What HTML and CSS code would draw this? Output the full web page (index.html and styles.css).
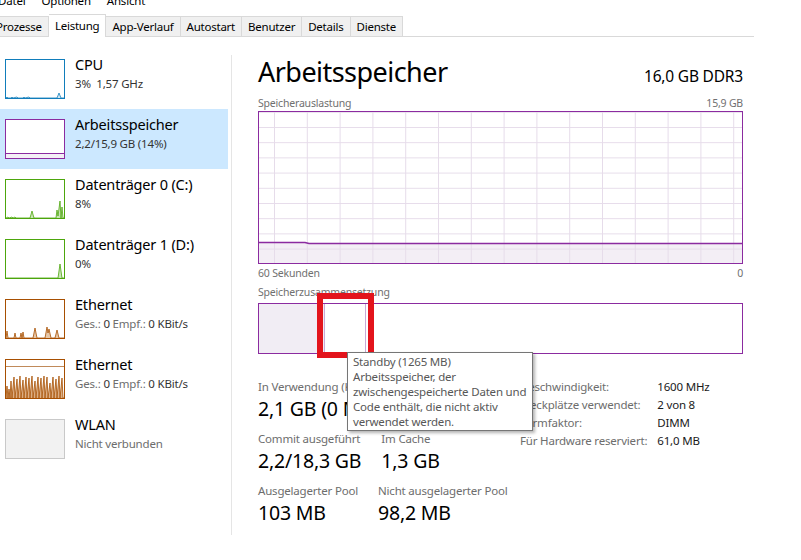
FILE: index.html
```html
<!DOCTYPE html>
<html lang="de">
<head>
    <meta charset="UTF-8">
    <title>Task-Manager</title>
    <link rel="stylesheet" href="styles.css">
</head>
<body>
    <div class="menu"><span>Datei</span><span>Optionen</span><span>Ansicht</span></div>
    <div class="tabs">
        <div class="tab">Prozesse</div>
        <div class="tab on">Leistung</div>
        <div class="tab">App-Verlauf</div>
        <div class="tab">Autostart</div>
        <div class="tab">Benutzer</div>
        <div class="tab">Details</div>
        <div class="tab">Dienste</div>
    </div>
    <div class="main">
        <div class="side">
            <div class="item">
                <svg class="thumb" viewBox="0 0 60 40">
                    <rect x="0.5" y="0.5" width="59" height="39" fill="#fff" stroke="#117dbb"/>
                    <polyline points="1,39 2,38 3,39 6,39 7,38 8,39 12,38 13,39 18,39 19,38 20,39 24,38 25,39 52,39 54,34 56,39 59,39" fill="#d5e9f5" stroke="#117dbb" stroke-width="0.8"/>
                </svg>
                <div class="txt">
                    <div class="name">CPU</div>
                    <div class="sub">3%&nbsp; 1,57 GHz</div>
                </div>
            </div>
            <div class="item on">
                <svg class="thumb" viewBox="0 0 60 40">
                    <rect x="0.5" y="0.5" width="59" height="39" fill="#fff" stroke="#8b2ba0"/>
                    <rect x="1" y="34" width="58" height="5" fill="#f4eff6"/>
                    <line x1="1" y1="34.5" x2="59" y2="34.5" stroke="#8b2ba0"/>
                </svg>
                <div class="txt">
                    <div class="name">Arbeitsspeicher</div>
                    <div class="sub">2,2/15,9 GB (14%)</div>
                </div>
            </div>
            <div class="item">
                <svg class="thumb" viewBox="0 0 60 40">
                    <rect x="0.5" y="0.5" width="59" height="39" fill="#fff" stroke="#4da60c"/>
                    <polyline points="1,39 3,38 4,39 7,38 8,39 10,38 11,39 25,39 27,32 29,39 51,39 52,31 53,37 55,22 56,39 57,28 58,39 59,39" fill="#c9e5b5" stroke="#4da60c" stroke-width="0.8"/>
                </svg>
                <div class="txt">
                    <div class="name">Datenträger 0 (C:)</div>
                    <div class="sub">8%</div>
                </div>
            </div>
            <div class="item">
                <svg class="thumb" viewBox="0 0 60 40">
                    <rect x="0.5" y="0.5" width="59" height="39" fill="#fff" stroke="#4da60c"/>
                    <polyline points="1,39 53,39 55,25 57,39 59,39" fill="#c9e5b5" stroke="#4da60c" stroke-width="0.8"/>
                </svg>
                <div class="txt">
                    <div class="name">Datenträger 1 (D:)</div>
                    <div class="sub">0%</div>
                </div>
            </div>
            <div class="item">
                <svg class="thumb" viewBox="0 0 60 40">
                    <rect x="0.5" y="0.5" width="59" height="39" fill="#fff" stroke="#a74f01"/>
                    <polyline points="1,39 2,32 3,39 9,39 10,34 11,39 15,39 16,34 17,39 18,33 19,39 28,39 30,29 32,39 40,39 42,28 43,34 44,30 46,39 50,39 52,31 54,39 59,39" fill="#e6c7a8" stroke="#a74f01" stroke-width="0.8"/>
                </svg>
                <div class="txt">
                    <div class="name">Ethernet</div>
                    <div class="sub"><span class="dim">Ges.:</span> 0 <span class="dim">Empf.:</span> 0 KBit/s</div>
                </div>
            </div>
            <div class="item">
                <svg class="thumb" viewBox="0 0 60 40">
                    <rect x="0.5" y="0.5" width="59" height="39" fill="#fff" stroke="#a74f01"/>
                    <line x1="1" y1="7.5" x2="59" y2="7.5" stroke="#c08a5a"/>
                    <polyline points="1,39 2,27 3,39 4,30 5,39 6,22 7,39 9,18 10,39 12,20 13,39 15,17 16,39 18,21 19,39 21,18 22,39 24,19 25,39 27,17 28,39 30,22 31,39 33,18 34,39 36,19 37,39 39,17 40,39 42,18 43,39 45,24 46,39 48,18 49,39 51,20 52,39 54,17 55,39 57,19 58,39 59,39" fill="#dcae84" stroke="#a74f01" stroke-width="0.8"/>
                </svg>
                <div class="txt">
                    <div class="name">Ethernet</div>
                    <div class="sub"><span class="dim">Ges.:</span> 0 <span class="dim">Empf.:</span> 0 KBit/s</div>
                </div>
            </div>
            <div class="item">
                <svg class="thumb" viewBox="0 0 60 40">
                    <rect x="0.5" y="0.5" width="59" height="39" fill="#f2f2f2" stroke="#c9c9c9"/>
                </svg>
                <div class="txt">
                    <div class="name">WLAN</div>
                    <div class="sub dim">Nicht verbunden</div>
                </div>
            </div>
        </div>

        <div class="panel">
            <div class="head">
                <h1>Arbeitsspeicher</h1>
                <span class="total">16,0 GB DDR3</span>
            </div>
            <div class="cap"><span>Speicherauslastung</span><span>15,9 GB</span></div>
            <div class="chart">
                <svg width="483" height="151" viewBox="0 0 483 151">
                    <defs>
                        <pattern id="grid" x="15" y="15" width="32.8" height="15.2" patternUnits="userSpaceOnUse">
                            <path d="M0.5 0V15.2M0 0.5H32.8" stroke="#e6dcea" fill="none"/>
                        </pattern>
                    </defs>
                    <polygon points="0,130 46,130 50,131 483,131 483,151 0,151" fill="#f3eef5"/>
                    <rect width="483" height="151" fill="url(#grid)"/>
                    <polyline points="0,130.5 46,130.5 50,131.5 483,131.5" fill="none" stroke="#8b2ba0" stroke-width="1.4"/>
                </svg>
            </div>
            <div class="cap sec"><span>60 Sekunden</span><span>0</span></div>
            <div class="cap label">Speicherzusammensetzung</div>
            <div class="comp">
                <div class="used"></div>
                <div class="standby"></div>
                <div class="mark"></div>
                <div class="tip">
                    Standby (1265 MB)<br>
                    Arbeitsspeicher, der<br>
                    zwischengespeicherte Daten und<br>
                    Code enthält, die nicht aktiv<br>
                    verwendet werden.
                </div>
            </div>
            <div class="stats">
                <div class="left">
                    <div class="row">
                        <div><div class="lb">In Verwendung (Komprimiert)</div><div class="val">2,1 GB (0 MB)</div></div>
                        <div><div class="lb">Verfügbar</div><div class="val">13,7 GB</div></div>
                    </div>
                    <div class="row">
                        <div><div class="lb">Commit ausgeführt</div><div class="val">2,2/18,3 GB</div></div>
                        <div><div class="lb">Im Cache</div><div class="val">1,3 GB</div></div>
                    </div>
                    <div class="row">
                        <div><div class="lb">Ausgelagerter Pool</div><div class="val">103 MB</div></div>
                        <div><div class="lb">Nicht ausgelagerter Pool</div><div class="val">98,2 MB</div></div>
                    </div>
                </div>
                <div class="info">
                    <span class="lb">Geschwindigkeit:</span><span>1600 MHz</span>
                    <span class="lb">Steckplätze verwendet:</span><span>2 von 8</span>
                    <span class="lb">Formfaktor:</span><span>DIMM</span>
                    <span class="lb">Für Hardware reserviert:</span><span>61,0 MB</span>
                </div>
            </div>
        </div>
    </div>
</body>
</html>
```

FILE: styles.css
```css
body {
    margin: 0;
    width: 801px;
    height: 560px;
    overflow: hidden;
    background: #fff;
    color: #000;
    font-family: "Noto Sans", sans-serif;
    letter-spacing: -0.012em;
}
.menu {
    display: flex;
    margin: -7px 0 0 -10px;
    font-size: 11.5px;
    line-height: 15px;
}
.menu span {
    padding: 0 8px;
}
.tabs {
    display: flex;
    align-items: flex-end;
    width: 764px;
    height: 22px;
    margin: 6px 0 0 -10px;
    border-bottom: 1px solid #d9d9d9;
    font-size: 11.5px;
    letter-spacing: -0.02em;
}
.tab {
    height: 20px;
    line-height: 19px;
    padding: 0 6px;
    box-sizing: border-box;
    background: #f0f0f0;
    border: 1px solid #d9d9d9;
    border-left: none;
    border-bottom: none;
}
.tab.on {
    height: 23px;
    line-height: 21px;
    margin-bottom: -1px;
    background: #fff;
}
.main {
    display: flex;
    padding-top: 12px;
}
.side {
    width: 231px;
    flex: none;
}
.item {
    display: flex;
    gap: 10px;
    width: 228px;
    height: 60px;
    padding: 10px 0 0 5px;
    box-sizing: border-box;
}
.item.on {
    background: #cce8ff;
}
.thumb {
    width: 60px;
    height: 40px;
    flex: none;
    display: block;
}
.name {
    margin-top: -4px;
    font-size: 14.5px;
    line-height: 18px;
}
.sub {
    margin-top: 3px;
    font-size: 11.5px;
    line-height: 15px;
    color: #333;
}
.dim {
    color: #6d6d6d;
}
.panel {
    width: 485px;
    height: 480px;
    margin-top: 6px;
    padding-left: 26px;
    border-left: 1px solid #e5e5e5;
}
.head {
    display: flex;
    justify-content: space-between;
    align-items: baseline;
    height: 41px;
}
h1 {
    margin: 0;
    font-size: 27px;
    font-weight: normal;
    line-height: 34px;
    letter-spacing: -0.02em;
}
.total {
    font-size: 15.5px;
}
.cap {
    display: flex;
    justify-content: space-between;
    font-size: 10.5px;
    line-height: 14px;
    color: #707070;
}
.cap.sec {
    margin-top: 2px;
}
.cap.label {
    margin-top: 5px;
}
.chart {
    height: 153px;
    margin-top: 1px;
    box-sizing: border-box;
    border: 1px solid #8b2ba0;
}
.chart svg {
    display: block;
}
.comp {
    position: relative;
    display: flex;
    height: 51px;
    margin-top: 4px;
    box-sizing: border-box;
    border: 1px solid #8b2ba0;
}
.used {
    width: 65px;
    background: #f1edf4;
}
.standby {
    width: 42px;
    box-sizing: border-box;
    border-left: 1px solid #c9a9d6;
    border-right: 1px solid #c9a9d6;
}
.mark {
    position: absolute;
    left: 58px;
    top: -11px;
    width: 57px;
    height: 65px;
    box-sizing: border-box;
    border: 6px solid #e3141c;
}
.tip {
    position: absolute;
    z-index: 2;
    left: 88px;
    top: 48px;
    width: 186px;
    padding: 1px 0 1px 5px;
    box-sizing: border-box;
    background: #fff;
    border: 1px solid #767676;
    box-shadow: 2px 2px 3px rgba(0, 0, 0, 0.3);
    font-size: 11.5px;
    line-height: 15px;
    color: #575757;
    white-space: nowrap;
}
.stats {
    display: flex;
    margin-top: 25px;
}
.left {
    width: 262px;
    flex: none;
}
.row {
    display: flex;
    gap: 20px;
    margin-bottom: 9px;
    white-space: nowrap;
}
.lb {
    font-size: 11.5px;
    line-height: 15px;
    color: #6d6d6d;
}
.val {
    margin-top: 1px;
    font-size: 19.5px;
    line-height: 27px;
}
.info {
    display: grid;
    grid-template-columns: auto auto;
    column-gap: 10px;
    align-content: start;
    font-size: 11.5px;
    line-height: 18px;
    margin-top: -1px;
    white-space: nowrap;
}
.info span {
    color: #1a1a1a;
}
.info .lb {
    line-height: 18px;
    color: #6d6d6d;
}
```
